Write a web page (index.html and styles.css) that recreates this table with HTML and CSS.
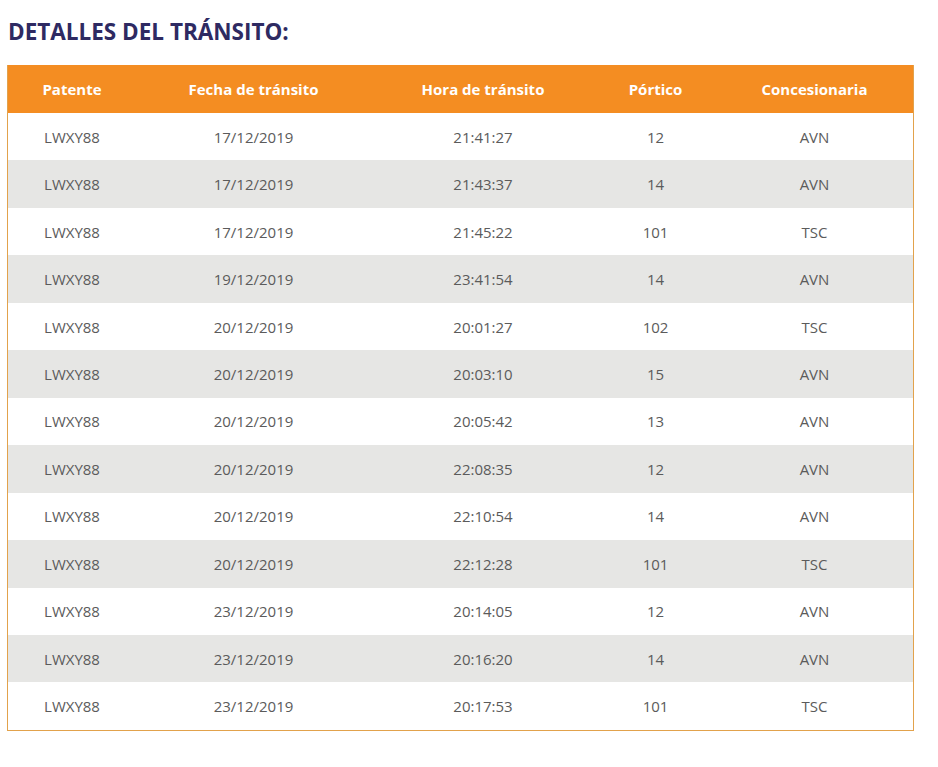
FILE: index.html
```html
<!DOCTYPE html>
<html lang="es">
<head>
<meta charset="utf-8">
<title>Detalles del tránsito</title>
<link rel="stylesheet" href="styles.css">
</head>
<body>
<div class="page">
  <h2 class="title">DETALLES DEL TRÁNSITO:</h2>
  <div class="table-box">
  <table class="transits">
    <colgroup>
      <col class="c1"><col class="c2"><col class="c3"><col class="c4"><col class="c5">
    </colgroup>
    <thead>
      <tr><th>Patente</th><th>Fecha de tránsito</th><th>Hora de tránsito</th><th>Pórtico</th><th>Concesionaria</th></tr>
    </thead>
    <tbody>
      <tr><td>LWXY88</td><td>17/12/2019</td><td>21:41:27</td><td>12</td><td>AVN</td></tr>
      <tr><td>LWXY88</td><td>17/12/2019</td><td>21:43:37</td><td>14</td><td>AVN</td></tr>
      <tr><td>LWXY88</td><td>17/12/2019</td><td>21:45:22</td><td>101</td><td>TSC</td></tr>
      <tr><td>LWXY88</td><td>19/12/2019</td><td>23:41:54</td><td>14</td><td>AVN</td></tr>
      <tr><td>LWXY88</td><td>20/12/2019</td><td>20:01:27</td><td>102</td><td>TSC</td></tr>
      <tr><td>LWXY88</td><td>20/12/2019</td><td>20:03:10</td><td>15</td><td>AVN</td></tr>
      <tr><td>LWXY88</td><td>20/12/2019</td><td>20:05:42</td><td>13</td><td>AVN</td></tr>
      <tr><td>LWXY88</td><td>20/12/2019</td><td>22:08:35</td><td>12</td><td>AVN</td></tr>
      <tr><td>LWXY88</td><td>20/12/2019</td><td>22:10:54</td><td>14</td><td>AVN</td></tr>
      <tr><td>LWXY88</td><td>20/12/2019</td><td>22:12:28</td><td>101</td><td>TSC</td></tr>
      <tr><td>LWXY88</td><td>23/12/2019</td><td>20:14:05</td><td>12</td><td>AVN</td></tr>
      <tr><td>LWXY88</td><td>23/12/2019</td><td>20:16:20</td><td>14</td><td>AVN</td></tr>
      <tr><td>LWXY88</td><td>23/12/2019</td><td>20:17:53</td><td>101</td><td>TSC</td></tr>
    </tbody>
  </table>
  </div>
</div>
</body>
</html>
```
FILE: styles.css
```css
html, body {
  margin: 0;
  padding: 0;
  background: #ffffff;
}
body {
  font-family: "Open Sans", "Liberation Sans", sans-serif;
}
.page {
  padding: 17px 0 0 7px;
  width: 907px;
}
.title {
  margin: 0 0 18px 1px;
  font-size: 22.5px;
  line-height: 30px;
  font-weight: 700;
  color: #2e2a62;
}
.table-box {
  width: 905px;
  border: 1px solid #e2a24c;
  border-top: 0;
}
.transits {
  width: 905px;
  border-collapse: collapse;
  table-layout: fixed;
}
.c1 { width: 128px; }
.c2 { width: 235px; }
.c3 { width: 224px; }
.c4 { width: 121px; }
.c5 { width: 197px; }
.transits th {
  background: #f48d22;
  color: #ffffff;
  font-size: 15px;
  font-weight: 700;
  height: 48px;
  padding: 0;
  text-align: center;
  vertical-align: middle;
}
.transits td {
  font-size: 15px;
  color: #5b5b5b;
  height: 47.46px;
  padding: 0;
  text-align: center;
  vertical-align: middle;
}
.transits tbody tr:nth-child(even) td {
  background: #e6e6e4;
}
```
